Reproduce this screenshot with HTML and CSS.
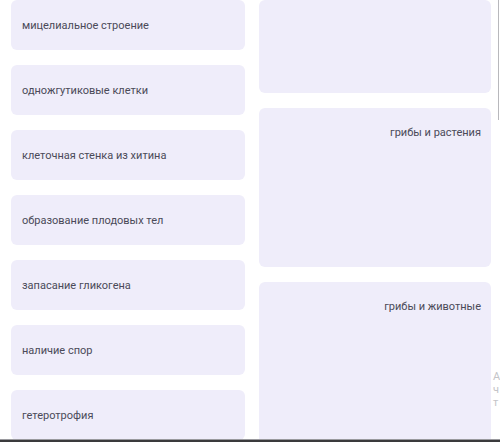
FILE: index.html
```html
<!DOCTYPE html>
<html lang="ru">
<head>
<meta charset="utf-8">
<link rel="stylesheet" href="styles.css">
</head>
<body>
<div class="page">
  <div class="col left">
    <div class="card item">мицелиальное строение</div>
    <div class="card item">одножгутиковые клетки</div>
    <div class="card item">клеточная стенка из хитина</div>
    <div class="card item">образование плодовых тел</div>
    <div class="card item">запасание гликогена</div>
    <div class="card item">наличие спор</div>
    <div class="card item">гетеротрофия</div>
  </div>
  <div class="col right">
    <div class="card zone zone-a"></div>
    <div class="card zone zone-b">грибы и растения</div>
    <div class="card zone zone-c">грибы и животные</div>
  </div>
</div>
<div class="edge-text">А<br>ч<br>т</div>
<div class="edge-line"></div>
<div class="bottom-bar"></div>
</body>
</html>
```
FILE: styles.css
```css
html, body {
  margin: 0;
  padding: 0;
  background: #ffffff;
}
body {
  width: 500px;
  height: 442px;
  overflow: hidden;
  position: relative;
  font-family: Roboto, "Noto Sans", sans-serif;
  font-size: 11px;
  color: #4a4a58;
}
.page {
  display: flex;
  gap: 14px;
  padding-left: 11px;
}
.col {
  display: flex;
  flex-direction: column;
  gap: 15px;
}
.left { width: 234px; }
.right { width: 232px; }
.card {
  background: #efedfa;
  border-radius: 6px;
  box-sizing: border-box;
}
.item {
  height: 50px;
  display: flex;
  align-items: center;
  padding-left: 11px;
}
.zone {
  text-align: right;
  padding: 18px 10px 0 0;
}
.zone-a { height: 93px; }
.zone-b { height: 159px; }
.zone-c { height: 170px; }
.edge-text {
  position: absolute;
  left: 493px;
  top: 370px;
  font-size: 11px;
  line-height: 13px;
  color: #c4c4c8;
}
.edge-line {
  position: absolute;
  left: 498px;
  top: 0;
  width: 1px;
  height: 120px;
  background: #b8b8bc;
}
.bottom-bar {
  position: absolute;
  left: 0;
  bottom: 0;
  width: 500px;
  height: 2px;
  background: #3a3a3c;
  border-top: 1px solid #9a9a9e;
}
```
